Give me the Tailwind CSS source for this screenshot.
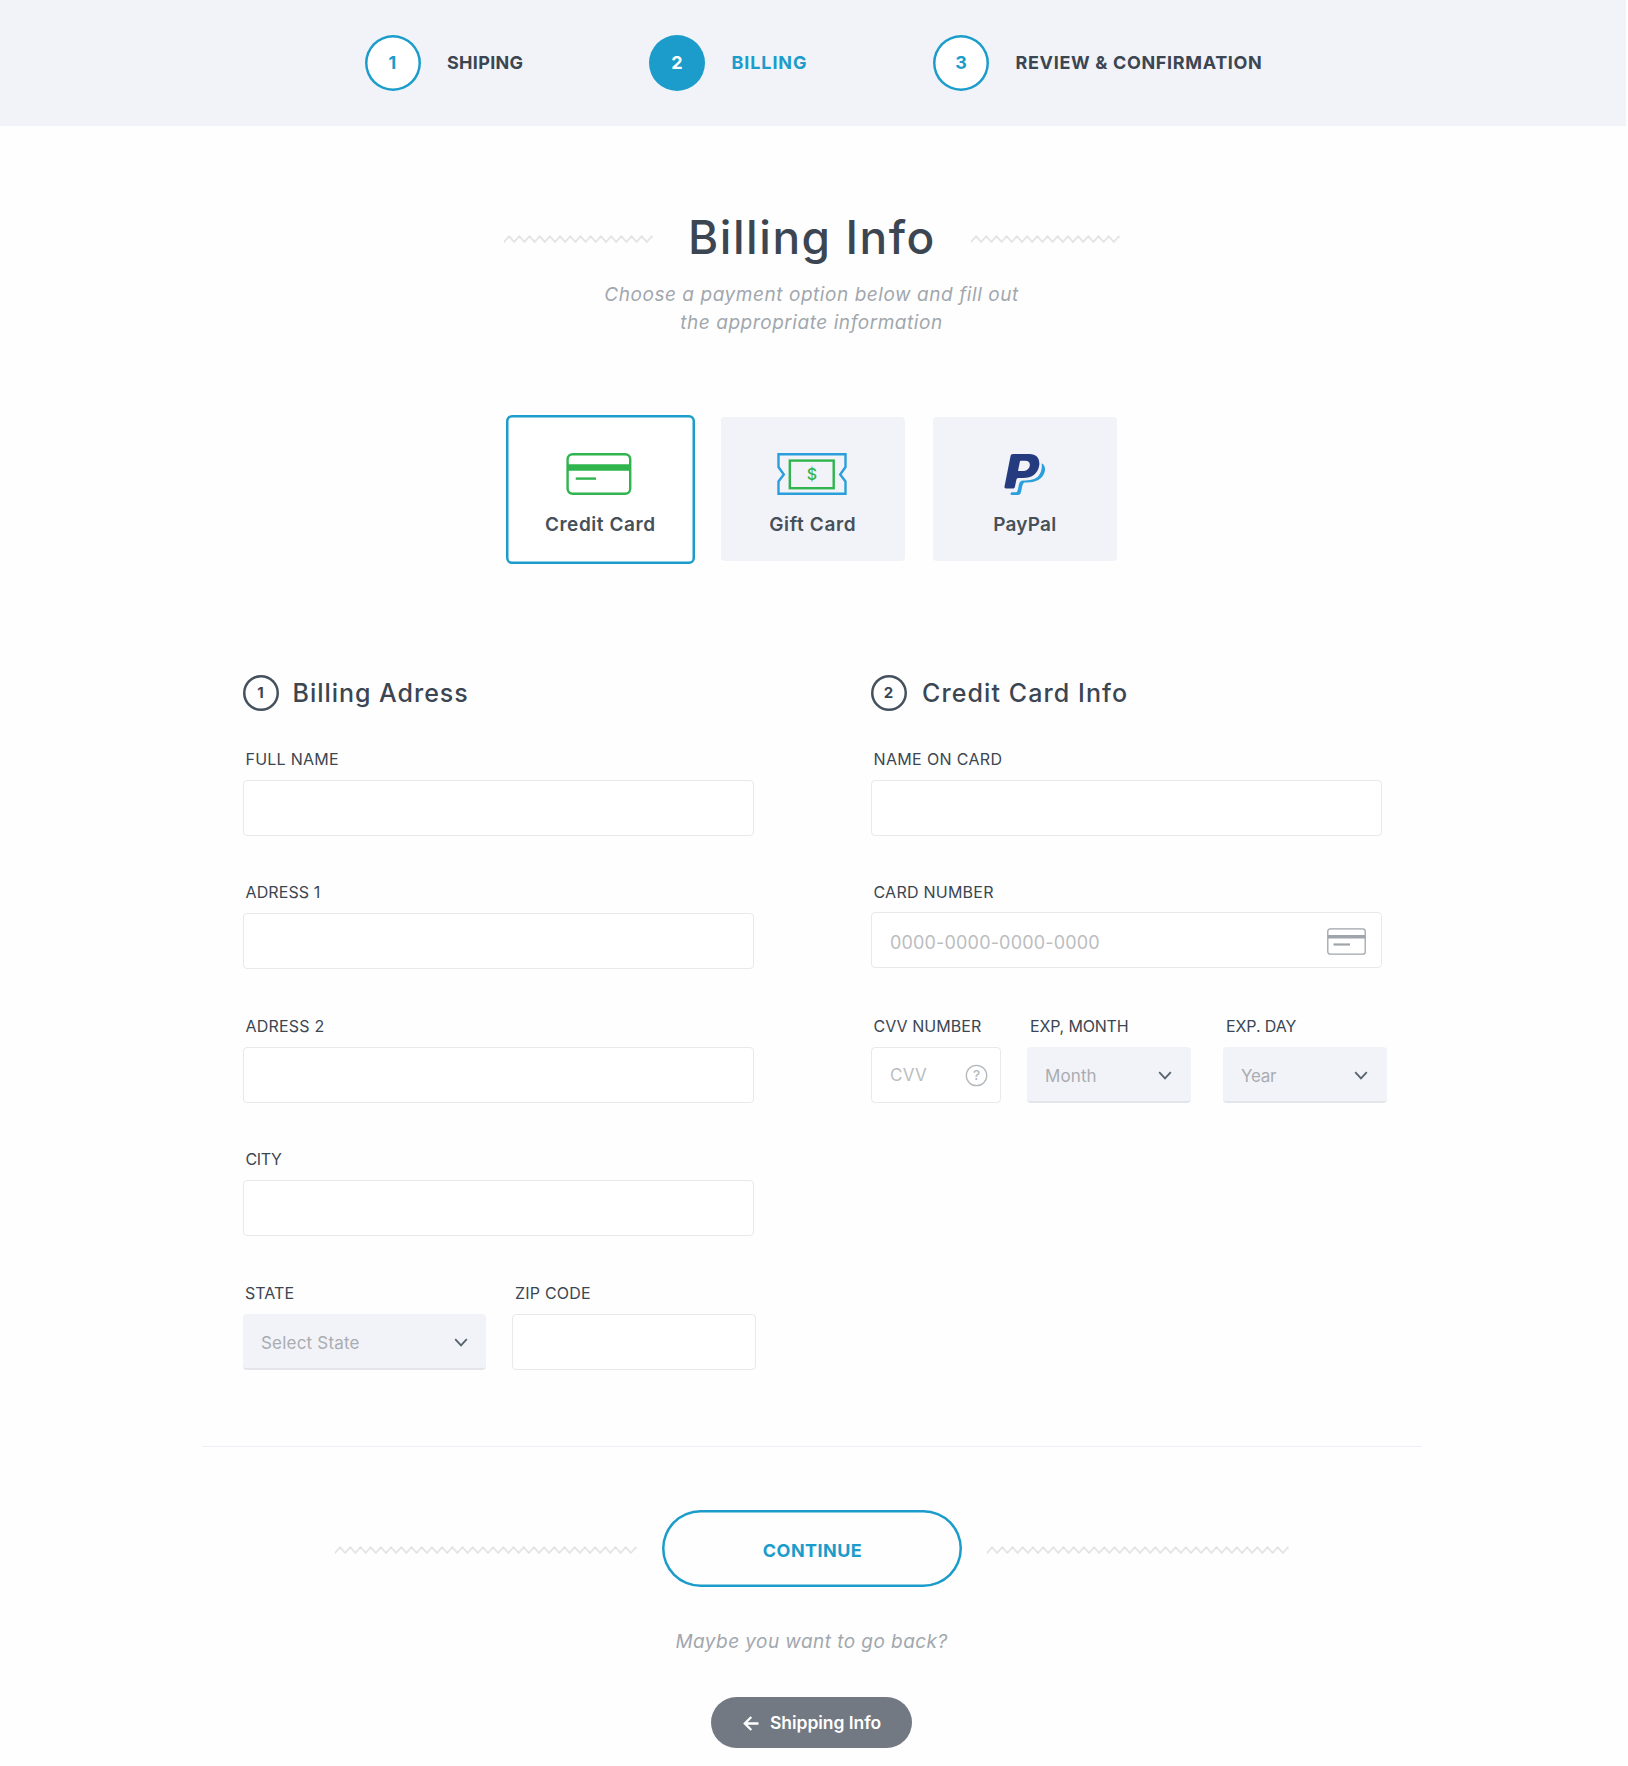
<!DOCTYPE html>
<html lang="en">
<head>
<meta charset="utf-8">
<title>Billing Info</title>
<script src="https://cdn.jsdelivr.net/npm/@tailwindcss/browser@4"></script>
</head>
<body class="bg-[#fefefe] font-['Inter',sans-serif] text-[#3b4652]">
<div class="w-[1626px] h-[1766px] overflow-hidden">

  <!-- Steps -->
  <header class="flex h-[126px] items-center bg-[#f2f3f8] pl-[364.5px] text-[18px] font-bold leading-6">
    <div class="flex w-[284.5px] items-center">
      <span class="flex size-14 items-center justify-center rounded-full bg-white text-[#1c9cca] shadow-[inset_0_0_0_2.5px_#1c9cca]">1</span>
      <span class="ml-[26.5px] whitespace-nowrap tracking-[0.3px]">SHIPING</span>
    </div>
    <div class="flex w-[284px] items-center">
      <span class="flex size-14 items-center justify-center rounded-full bg-[#1c9cca] text-white">2</span>
      <span class="ml-[26.5px] whitespace-nowrap tracking-[0.9px] text-[#1c9cca]">BILLING</span>
    </div>
    <div class="flex items-center">
      <span class="flex size-14 items-center justify-center rounded-full bg-white text-[#1c9cca] shadow-[inset_0_0_0_2.5px_#1c9cca]">3</span>
      <span class="ml-[26.5px] whitespace-nowrap tracking-[0.66px]">REVIEW &amp; CONFIRMATION</span>
    </div>
  </header>

  <!-- Title -->
  <div class="mt-20 grid h-[60px] grid-cols-[149px_318px_149px] items-center pl-[504px]">
    <svg class="mt-[5px] h-2 w-[149px]" viewBox="0 0 149 8"><defs><pattern id="zig" width="10.2" height="8" patternUnits="userSpaceOnUse"><path d="M-1 8.2L0 7L5.1 1.2L10.2 7L11.2 8.2" fill="none" stroke="#dfe1e2" stroke-width="1.5"/></pattern></defs><rect width="148.5" height="8" fill="url(#zig)"/></svg>
    <h1 class="whitespace-nowrap pt-px text-center text-[46px] font-medium leading-[60px] tracking-[1.55px]">Billing Info</h1>
    <svg class="mt-[5px] h-2 w-[149px]" viewBox="0 0 149 8"><rect width="148.5" height="8" fill="url(#zig)"/></svg>
  </div>
  <p class="mt-[15px] pr-[3px] text-center text-[19px] italic leading-7 tracking-[0.55px] text-[#a1a7ad]">Choose a payment option below and fill out<br>the appropriate information</p>

  <!-- Payment options -->
  <div class="mt-[78px] flex h-[149px] items-start pl-[505.5px] text-[19px] font-semibold leading-[25px] text-[#465059]">
    <div class="flex h-[149px] w-[189.5px] flex-col items-center rounded-md bg-white pt-[38px] shadow-[inset_0_0_0_2.5px_#1c9cca]">
      <svg class="mr-[2px] h-[42px] w-[66px]" viewBox="0 0 66 42" fill="none" stroke="#2fb44e" stroke-width="2.4"><rect x="1.6" y="1.2" width="62.6" height="39.6" rx="5"/><path d="M1.6 14.5H64.2" stroke-width="6.6"/><path d="M9.7 25.6H30"/></svg>
      <span class="mt-[17px] whitespace-nowrap tracking-[0.56px]">Credit Card</span>
    </div>
    <div class="ml-[25.5px] mt-0.5 flex h-[144px] w-[184.5px] flex-col items-center rounded bg-[#f2f3f8] pt-9">
      <svg class="mr-[2px] h-[42px] w-[70px]" viewBox="0 0 70 42" fill="none" stroke-width="2.4"><path d="M1.5 1.2H68.5V14L63.2 21.5L68.5 28.5V40.8H1.5V28.5L6.8 21.5L1.5 14Z" stroke="#2a9fdb"/><rect x="12.8" y="7.6" width="43.9" height="27.6" stroke="#2fb44e"/><text x="35" y="26.8" text-anchor="middle" font-family="Inter" font-size="16" font-weight="500" fill="#2fb44e">$</text></svg>
      <span class="mt-[17px] whitespace-nowrap tracking-[0.64px]">Gift Card</span>
    </div>
    <div class="ml-[27.5px] mt-0.5 flex h-[144px] w-[184.5px] flex-col items-center rounded bg-[#f2f3f8] pt-9">
      <svg class="ml-px h-[42px] w-[42px]" viewBox="0 0 42 42"><path d="M37.6 10.2C41 12 41.9 16 40.3 20C38.2 25.5 33 28.6 26.5 29.3C22 29.6 20.4 29.3 19.7 30C17.8 32 18 37 16.5 40.5C15.8 42 14.5 42 12.5 42H7.5C6.2 42 6.3 39.8 7.5 39.3H12.2C13.6 39 14 36 14.6 33C15.2 29.5 16 27.6 18.8 27.4C26 27.4 31.5 26.5 34.8 22.4C37.5 19 38.2 14.5 37.6 10.2Z" fill="#2a9fdb"/><path d="M9 1H25.5C32.5 1 36 5.5 35.3 12C34.2 20.5 28 25 19 25H15C13.2 25 12.6 25.6 12.2 27.5L11 33.5C10.7 35 10 35.5 8.5 35.5H2C.8 35.5.2 34.8.5 33.5L6.5 3.2C6.8 1.7 7.6 1 9 1ZM15.8 9L14 18H18.5C22.5 18 25.3 16 25.8 12.5C26.2 9.5 24.5 7.8 21 7.8H17.5C16.4 7.8 16 8 15.8 9Z" fill="#253b80" fill-rule="evenodd"/></svg>
      <span class="mt-[17px] whitespace-nowrap tracking-[0.22px]">PayPal</span>
    </div>
  </div>

  <!-- Form -->
  <div class="mt-[111px] flex h-[695px] items-start pl-[242.5px]">
    <section class="w-[628px]">
      <h2 class="flex h-9 items-center text-[25px] font-medium tracking-[0.97px]">
        <span class="mr-3.5 flex size-9 items-center justify-center rounded-full text-[15px] font-bold tracking-normal shadow-[inset_0_0_0_2.5px_#44505c]">1</span><span class="pt-0.5">Billing Adress</span>
      </h2>
      <div class="mt-[38px] flex flex-col gap-[46.4px] text-[16px] leading-5">
        <div><div class="pl-[3px] tracking-[0.24px]">FULL NAME</div><div class="mt-[11px] h-14 w-[511px] rounded border border-[#e9e9eb] bg-white"></div></div>
        <div><div class="pl-[3px] tracking-[0.1px]">ADRESS 1</div><div class="mt-[11px] h-14 w-[511px] rounded border border-[#e9e9eb] bg-white"></div></div>
        <div><div class="pl-[3px] tracking-[0.2px]">ADRESS 2</div><div class="mt-[11px] h-14 w-[511px] rounded border border-[#e9e9eb] bg-white"></div></div>
        <div><div class="pl-[3px] tracking-[-0.4px]">CITY</div><div class="mt-[11px] h-14 w-[511px] rounded border border-[#e9e9eb] bg-white"></div></div>
        <div class="flex gap-[26px]">
          <div class="w-[243.5px]">
            <div class="pl-[2.5px] tracking-[0.06px]">STATE</div>
            <div class="mt-[11px] flex h-14 items-center justify-between rounded border-b-2 border-[#e3e5ea] bg-[#f2f3f8] pl-[18.5px] pr-[18.5px] pt-1 text-[17px] tracking-[0.2px] text-[#a9acb1]">Select State
              <svg class="h-[9px] w-[14px]" viewBox="0 0 14 9" fill="none" stroke="#56626d" stroke-width="1.8"><path d="M1.2 1.2L7 7.4L12.8 1.2"/></svg></div>
          </div>
          <div class="w-[244px]">
            <div class="pl-[3px] tracking-[0.2px]">ZIP CODE</div>
            <div class="mt-[11px] h-14 rounded border border-[#e9e9eb] bg-white"></div>
          </div>
        </div>
      </div>
    </section>

    <section>
      <h2 class="flex h-9 items-center text-[25px] font-medium tracking-[1.09px]">
        <span class="mr-[15.5px] flex size-9 items-center justify-center rounded-full text-[15px] font-bold tracking-normal shadow-[inset_0_0_0_2.5px_#44505c]">2</span><span class="pt-0.5">Credit Card Info</span>
      </h2>
      <div class="mt-[38px] flex flex-col gap-[46.4px] text-[16px] leading-5">
        <div><div class="pl-[3px] tracking-[0.35px]">NAME ON CARD</div><div class="mt-[11px] h-14 w-[511px] rounded border border-[#e9e9eb] bg-white"></div></div>
        <div>
          <div class="pl-[3px] tracking-[0.24px]">CARD NUMBER</div>
          <div class="mb-px mt-2.5 flex h-14 w-[511px] items-center justify-between rounded border border-[#e9e9eb] bg-white pl-[18.5px] pr-[15px] text-[18px] tracking-[0.17px] text-[#bbbdc0]"><span class="pt-[5px]">0000-0000-0000-0000</span>
            <svg class="mt-0.5 h-[27px] w-[39px]" viewBox="0 0 39 27" fill="none" stroke="#a0a5ab"><rect x=".8" y=".8" width="37.4" height="25.4" rx="2.5" stroke-width="1.3"/><path d="M.8 8.8H38.2" stroke-width="3.6"/><path d="M6.5 16.5H23" stroke-width="2.2"/></svg></div>
        </div>
        <div class="flex">
          <div class="w-[130.5px]">
            <div class="pl-[3px] tracking-[0.06px]">CVV NUMBER</div>
            <div class="mt-[11px] flex h-14 items-center justify-between rounded border border-[#e9e9eb] bg-white pl-[18.5px] pr-[12px] pt-px text-[17px] tracking-[0.3px] text-[#bbbdc0]">CVV
              <svg class="size-[23px]" viewBox="0 0 23 23"><circle cx="11.5" cy="11.5" r="10.2" fill="none" stroke="#b4b8bc" stroke-width="1.3"/><text x="11.5" y="16.4" text-anchor="middle" font-family="Inter" font-size="13.5" font-weight="500" letter-spacing="0" fill="#b4b8bc">?</text></svg></div>
          </div>
          <div class="ml-[26px] w-[163.5px]">
            <div class="whitespace-nowrap pl-[3px] tracking-[-0.17px]">EXP, MONTH</div>
            <div class="mt-[11px] flex h-14 items-center justify-between rounded border-b-2 border-[#e3e5ea] bg-[#f2f3f8] pl-[18px] pr-[18.5px] pt-1 text-[17px] tracking-[0.1px] text-[#a9acb1]">Month
              <svg class="h-[9px] w-[14px]" viewBox="0 0 14 9" fill="none" stroke="#56626d" stroke-width="1.8"><path d="M1.2 1.2L7 7.4L12.8 1.2"/></svg></div>
          </div>
          <div class="ml-[32.5px] w-[163.5px]">
            <div class="whitespace-nowrap pl-[3px] tracking-[-0.1px]">EXP. DAY</div>
            <div class="mt-[11px] flex h-14 items-center justify-between rounded border-b-2 border-[#e3e5ea] bg-[#f2f3f8] pl-[18px] pr-[18.5px] pt-1 text-[17px] tracking-[-0.3px] text-[#a9acb1]">Year
              <svg class="h-[9px] w-[14px]" viewBox="0 0 14 9" fill="none" stroke="#56626d" stroke-width="1.8"><path d="M1.2 1.2L7 7.4L12.8 1.2"/></svg></div>
          </div>
        </div>
      </div>
    </section>
  </div>

  <hr class="ml-[202px] mt-[76px] w-[1220px] border-t border-[#eeeff6]">

  <!-- Actions -->
  <div class="mt-[63px] grid h-[77px] grid-cols-[302px_300px_302px] items-center gap-[25px] pl-[335px]">
    <svg class="mt-[3px] h-2 w-[302px]" viewBox="0 0 302 8"><rect width="301.5" height="8" fill="url(#zig)"/></svg>
    <div class="flex h-[77px] items-center justify-center rounded-full pl-px pt-[3px] text-[18px] font-bold tracking-[0.45px] text-[#1c9cca] shadow-[inset_0_0_0_2.5px_#1c9cca]">CONTINUE</div>
    <svg class="mt-[3px] h-2 w-[302px]" viewBox="0 0 302 8"><rect width="301.5" height="8" fill="url(#zig)"/></svg>
  </div>
  <p class="mt-[41px] pr-[3px] text-center text-[19px] italic leading-7 tracking-[0.44px] text-[#a1a7ad]">Maybe you want to go back?</p>
  <div class="ml-[711px] mt-[41px] flex h-[51px] w-[201px] items-center rounded-full bg-[#727982] pl-[31.5px] pt-0.5 text-[17.5px] font-semibold tracking-[-0.05px] text-white">
    <svg class="-mt-px h-[15px] w-[16px]" viewBox="0 0 16 15" fill="none" stroke="#fff" stroke-width="2.3"><path d="M8.3 1L1.8 7.5L8.3 14M2 7.5H15.5"/></svg>
    <span class="ml-[11.5px] whitespace-nowrap">Shipping Info</span>
  </div>
</div>
</body>
</html>
